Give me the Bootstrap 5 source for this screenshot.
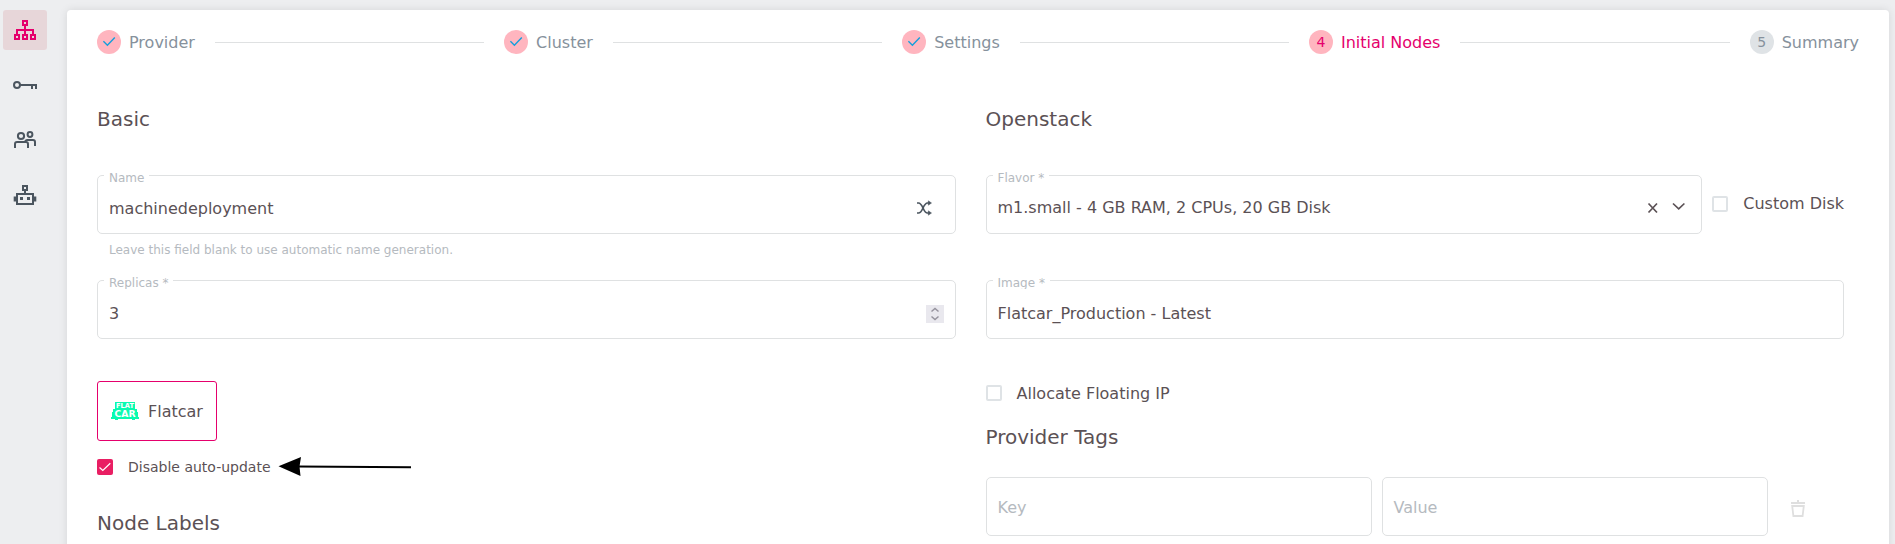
<!DOCTYPE html>
<html lang="en">
<head>
<meta charset="utf-8">
<title>Initial Nodes</title>
<link href="https://cdn.jsdelivr.net/npm/bootstrap@5.3.0/dist/css/bootstrap.min.css" rel="stylesheet">
<style>
body{font-family:"DejaVu Sans",sans-serif;font-size:16px;line-height:24px;color:#5b5155;background:#edeef0;height:544px;overflow:hidden}
.side{width:67px;padding:10px 0 0 3px;gap:15px}
.side-item{width:44px;height:40px;border-radius:3px;color:#4b555f}
.side-item.on{background:#e7d6d9;color:#e5006c}
.panel{width:1822px;height:560px;margin-top:10px;border-radius:4px;padding:20px 30px;box-shadow:0 0 8px rgba(0,0,0,.1)}
.step-dot{width:24px;height:24px;border-radius:50%;background:#ffb5bf;margin-right:8px;font-size:14px;line-height:25px}
.step{color:#86919c;line-height:26px;height:24px}
.step.on{color:#e5006c}
.step.next .step-dot{background:#dfe3e6}
.step-line{height:1px;background:#dfe1e2;margin:1px 20px 0}
.cols{margin-top:53px;width:1747px;gap:30px}
.cols>div{flex:1 1 0;min-width:0}
h2{font-size:20px;line-height:24px;font-weight:400;margin:0}
.field{border:1px solid #dfe1e2;border-radius:5px;height:59px;padding:0 11px}
.field>label{position:absolute;left:6px;top:-5px;height:13px;line-height:14px;font-size:12px;padding:0 5px 0 5px;background:#fff;color:#b5bac0;overflow:hidden}
.value{padding-top:8px}
.hint{font-size:12px;line-height:16px;height:46px;padding:8px 12px 0;color:#b5bac0}
.box{width:16px;height:16px;border:2px solid #dfe3e6;border-radius:2px;margin-right:15px;flex:none}
.box.on{border:0;background:#e91e63}
.muted{color:#b5bac0}
.os{width:120px;height:60px;border:1px solid #e5006c;border-radius:3px;padding-left:13px}
.spin{width:18px;height:18px;background:#e9e8ee}
svg{display:block;flex:none}
</style>
</head>
<body class="d-flex">
<nav class="side d-flex flex-column flex-shrink-0">
  <a class="side-item on d-flex align-items-center justify-content-center"><svg width="24" height="24" fill="none" stroke="currentColor" stroke-width="2"><path d="M10 3h4v4h-4zM2 17h4v4H2zM10 17h4v4h-4zM18 17h4v4h-4zM12 7v10M4 17v-5h16v5"/></svg></a>
  <a class="side-item d-flex align-items-center justify-content-center"><svg width="24" height="24" fill="none" stroke="currentColor" stroke-width="2"><circle cx="4" cy="12" r="3"/><path d="M7 12h16v4M19 12v4"/></svg></a>
  <a class="side-item d-flex align-items-center justify-content-center"><svg width="24" height="24" fill="none" stroke="currentColor" stroke-width="2"><circle cx="8" cy="8" r="3.1"/><circle cx="17" cy="6.500" r="2.400"/><path d="M2 20v-4q0-2 2-2h9q2 0 2 2v4M14 12h6q2 0 2 2v4M12 13.500q1-1.500 2-1.500"/></svg></a>
  <a class="side-item d-flex align-items-center justify-content-center"><svg width="24" height="24" fill="none" stroke="currentColor" stroke-width="2"><path d="M10 3h4v4h-4zM12 7v4M4 11h16v10H4z"/><path d="M2 13.500v5M22 13.500v5" stroke-width="2.600"/><path d="M7 15.500h3M14 15.500h3" stroke-width="3"/></svg></a>
</nav>
<main class="panel bg-white flex-shrink-0">
  <div class="d-flex align-items-center">
    <div class="step d-flex"><span class="step-dot"><svg width="24" height="24" fill="none" stroke="#169fdb" stroke-width="1.400"><path d="M6.400 11.300l4 3.900 7.400-7.800"/></svg></span>Provider</div>
    <div class="step-line flex-fill"></div>
    <div class="step d-flex"><span class="step-dot"><svg width="24" height="24" fill="none" stroke="#169fdb" stroke-width="1.400"><path d="M6.400 11.300l4 3.900 7.400-7.800"/></svg></span>Cluster</div>
    <div class="step-line flex-fill"></div>
    <div class="step d-flex"><span class="step-dot"><svg width="24" height="24" fill="none" stroke="#169fdb" stroke-width="1.400"><path d="M6.400 11.300l4 3.900 7.400-7.800"/></svg></span>Settings</div>
    <div class="step-line flex-fill"></div>
    <div class="step on d-flex"><span class="step-dot text-center">4</span>Initial Nodes</div>
    <div class="step-line flex-fill"></div>
    <div class="step next d-flex"><span class="step-dot text-center">5</span>Summary</div>
  </div>
  <div class="cols d-flex">
    <div>
      <h2>Basic</h2>
      <div class="field position-relative d-flex align-items-center justify-content-between" style="margin-top:44px">
        <label>Name</label><span class="value">machinedeployment</span>
        <svg width="16" height="16" style="margin:7px 12px 0 0" fill="none" stroke="#4b555f" stroke-width="1.700"><path d="M1 3h1.500C7 3 7 13 11.500 13H13M1 13h1.500C7 13 7 3 11.500 3H13"/><path d="M12.300 0.800L15.500 3l-3.200 2.200zM12.300 10.800l3.200 2.200-3.200 2.200z" fill="#4b555f" stroke-width=".5"/></svg>
      </div>
      <div class="hint">Leave this field blank to use automatic name generation.</div>
      <div class="field position-relative d-flex align-items-center justify-content-between">
        <label>Replicas *</label><span class="value">3</span>
        <span class="spin mt-2"><svg width="18" height="18" fill="none" stroke="#96939e" stroke-width="1.500"><path d="M5.500 6.500L9 3.500l3.500 3M5.500 11.500l3.500 3 3.500-3"/></svg></span>
      </div>
      <div class="os d-flex align-items-center" style="margin-top:42px">
        <svg width="28" height="18" viewBox="0 0 28 18" style="margin-right:9px"><path d="M4 0h20v7h2v3h1v5h1v2h-4v1h-3v-1H7v1H4v-1H0v-2h1v-5h1V7h2z" fill="#09fbb0"/><g fill="#fff" font-family="DejaVu Sans" font-weight="bold" text-anchor="middle"><text x="14" y="6.300" font-size="7" textLength="18" lengthAdjust="spacingAndGlyphs">FLAT</text><text x="14" y="15" font-size="9.500" textLength="21" lengthAdjust="spacingAndGlyphs">CAR</text></g></svg>
        <span style="padding-top:2px">Flatcar</span>
      </div>
      <div class="d-flex align-items-center" style="margin-top:16px;height:20px;font-size:14px">
        <span class="box on"><svg width="16" height="16" fill="none" stroke="#fff" stroke-width="1.200"><path d="M2.500 8.500l3.300 3L13.300 4.300"/></svg></span>
        <span style="line-height:20px;padding-bottom:1px">Disable auto-update</span>
        <svg width="134" height="20" style="margin-left:7px"><path d="M19 9.400L133 10.300" stroke="#000" stroke-width="2"/><path d="M0.500 9.200L23 0 21.500 9.400 22.500 19z"/></svg>
      </div>
      <h2 style="margin-top:34px">Node Labels</h2>
    </div>
    <div>
      <h2>Openstack</h2>
      <div class="d-flex align-items-center" style="margin-top:44px">
        <div class="field position-relative d-flex align-items-center flex-fill" style="margin-right:10px">
          <label>Flavor *</label><span class="flex-fill" style="padding-top:6px">m1.small - 4 GB RAM, 2 CPUs, 20 GB Disk</span>
          <svg width="50" height="16" style="margin:6px 3px 0 0" fill="none" stroke="#5b5155" stroke-width="1.700"><path d="M11.500 3.500l8.500 9M20 3.500l-8.500 9M36 3.500l5.700 5.300 5.700-5.300"/></svg>
        </div>
        <span class="box" style="margin-bottom:1px"></span><span style="margin-bottom:2px">Custom Disk</span>
      </div>
      <div class="field position-relative d-flex align-items-center" style="margin-top:46px">
        <label>Image *</label><span class="value">Flatcar_Production - Latest</span>
      </div>
      <div class="d-flex align-items-center" style="margin-top:42px;height:24px"><span class="box"></span><span style="padding-top:2px">Allocate Floating IP</span></div>
      <h2 style="margin-top:20px">Provider Tags</h2>
      <div class="d-flex align-items-center muted" style="margin-top:28px;gap:10px">
        <div class="field d-flex align-items-center" style="width:386px"><span style="padding-top:2px">Key</span></div>
        <div class="field d-flex align-items-center" style="width:386px"><span style="padding-top:2px">Value</span></div>
        <svg width="14" height="17" style="margin:3px 0 0 13px" fill="none" stroke="#dfdfdf"><path d="M0 3h14" stroke-width="2"/><path d="M6 0h2v3H6z" fill="#dfdfdf" stroke="none"/><path d="M1.200 6h11.600L11.600 16H2.400z" stroke-width="1.800"/></svg>
      </div>
    </div>
  </div>
</main>
<script src="https://cdn.jsdelivr.net/npm/bootstrap@5.3.0/dist/js/bootstrap.bundle.min.js"></script>
</body>
</html>
